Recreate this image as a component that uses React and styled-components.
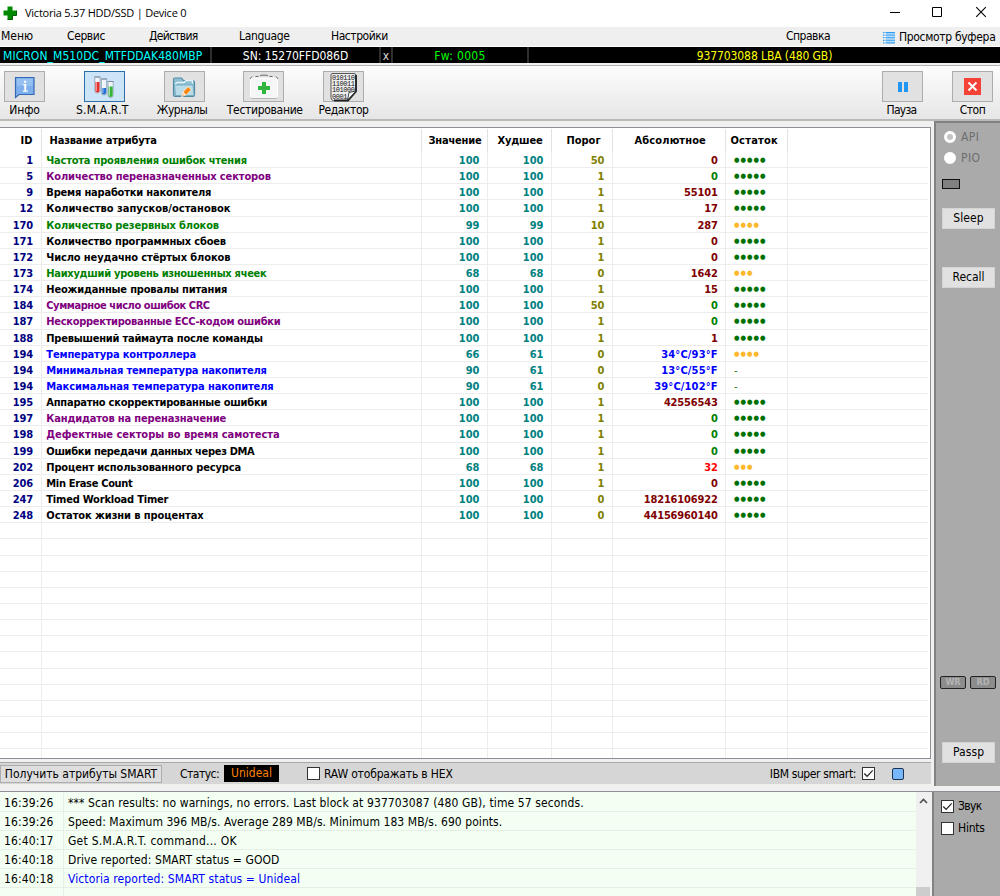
import React, { useState } from 'react'
import styled, { createGlobalStyle } from 'styled-components'

const GlobalStyle = createGlobalStyle`
    * {
        box-sizing: border-box;
    }
    body {
        margin: 0;
        overflow: hidden;
        background: #f0f0f0;
    }
    button {
        font: inherit;
        color: inherit;
        padding: 0;
        margin: 0;
    }
`

const attributes = [
    { id: 1, name: 'Частота проявления ошибок чтения', tone: 'green', value: 100, worst: 100, limit: 50, raw: '0', health: 5, ls: -0.21 },
    { id: 5, name: 'Количество переназначенных секторов', tone: 'purple', value: 100, worst: 100, limit: 1, raw: '0', rawTone: 'green', health: 5, ls: -0.12 },
    { id: 9, name: 'Время наработки накопителя', value: 100, worst: 100, limit: 1, raw: '55101', health: 5, ls: -0.19 },
    { id: 12, name: 'Количество запусков/остановок', value: 100, worst: 100, limit: 1, raw: '17', health: 5, ls: 0 },
    { id: 170, name: 'Количество резервных блоков', tone: 'green', value: 99, worst: 99, limit: 10, raw: '287', health: 4, ls: -0.15 },
    { id: 171, name: 'Количество программных сбоев', value: 100, worst: 100, limit: 1, raw: '0', health: 5, ls: -0.18 },
    { id: 172, name: 'Число неудачно стёртых блоков', value: 100, worst: 100, limit: 1, raw: '0', health: 5, ls: -0.12 },
    { id: 173, name: 'Наихудший уровень изношенных ячеек', tone: 'green', value: 68, worst: 68, limit: 0, raw: '1642', health: 3, ls: -0.28 },
    { id: 174, name: 'Неожиданные провалы питания', value: 100, worst: 100, limit: 1, raw: '15', health: 5, ls: -0.18 },
    { id: 184, name: 'Суммарное число ошибок CRC', tone: 'purple', value: 100, worst: 100, limit: 50, raw: '0', rawTone: 'green', health: 5, ls: -0.44 },
    { id: 187, name: 'Нескорректированные ECC-кодом ошибки', tone: 'purple', value: 100, worst: 100, limit: 1, raw: '0', rawTone: 'green', health: 5, ls: -0.29 },
    { id: 188, name: 'Превышений таймаута после команды', value: 100, worst: 100, limit: 1, raw: '1', health: 5, ls: -0.23 },
    { id: 194, name: 'Температура контроллера', tone: 'blue', value: 66, worst: 61, limit: 0, raw: '34°C/93°F', rawTone: 'blue', health: 4, ls: -0.15 },
    { id: 194, name: 'Минимальная температура накопителя', tone: 'blue', value: 90, worst: 61, limit: 0, raw: '13°C/55°F', rawTone: 'blue', health: 0, ls: -0.17 },
    { id: 194, name: 'Максимальная температура накопителя', tone: 'blue', value: 90, worst: 61, limit: 0, raw: '39°C/102°F', rawTone: 'blue', health: 0, ls: -0.13 },
    { id: 195, name: 'Аппаратно скорректированные ошибки', value: 100, worst: 100, limit: 1, raw: '42556543', health: 5, ls: -0.23 },
    { id: 197, name: 'Кандидатов на переназначение', tone: 'purple', value: 100, worst: 100, limit: 1, raw: '0', rawTone: 'green', health: 5, ls: -0.17 },
    { id: 198, name: 'Дефектные секторы во время самотеста', tone: 'purple', value: 100, worst: 100, limit: 1, raw: '0', rawTone: 'green', health: 5, ls: -0.03 },
    { id: 199, name: 'Ошибки передачи данных через DMA', value: 100, worst: 100, limit: 1, raw: '0', rawTone: 'green', health: 5, ls: -0.32 },
    { id: 202, name: 'Процент использованного ресурса', value: 68, worst: 68, limit: 1, raw: '32', rawTone: 'red', health: 3, ls: -0.15 },
    { id: 206, name: 'Min Erase Count', value: 100, worst: 100, limit: 1, raw: '0', health: 5, ls: -0.32 },
    { id: 247, name: 'Timed Workload Timer', value: 100, worst: 100, limit: 0, raw: '18216106922', health: 5, ls: -0.2 },
    { id: 248, name: 'Остаток жизни в процентах', value: 100, worst: 100, limit: 0, raw: '44156960140', health: 5, ls: -0.08 },
]

const emptyRows = Array.from({ length: 15 }, (_, i) => i)

const tones = {
    black: '#000000',
    green: '#008000',
    purple: '#800080',
    blue: '#0000ff',
    red: '#ff0000',
    maroon: '#800000',
}

const logLines = [
    { time: '16:39:26', text: '*** Scan results: no warnings, no errors. Last block at 937703087 (480 GB), time 57 seconds.', ls: 0.11 },
    { time: '16:39:26', text: 'Speed: Maximum 396 MB/s. Average 289 MB/s. Minimum 183 MB/s. 690 points.', ls: 0.06 },
    { time: '16:40:17', text: 'Get S.M.A.R.T. command... OK', ls: 0.24 },
    { time: '16:40:18', text: 'Drive reported: SMART status = GOOD', ls: 0.08 },
    { time: '16:40:18', text: 'Victoria reported: SMART status = Unideal', color: '#0000ff', ls: 0.1 },
]

/* ---------- icons ---------- */

const InfoIcon = () => (
    <svg width="22" height="24" viewBox="0 0 22 24">
        <path d="M1.5 2.5h18.5v17H5l-3.5 3z" fill="#7fb0ee" stroke="#3568b5" strokeWidth="1.2" />
        <path d="M2.8 3.8h16v7h-16z" fill="#96bff2" />
        <path d="M9.2 9h3v6.500h1.600v1.200H8.800v-1.200h1.500v-5.300h-1.100zM10 5.800h2.200v2H10z" fill="#fff" />
    </svg>
)

const Tube = ({ x, y, level, color }) => (
    <g>
        <path d={`M${x} ${y}v13.5a2.600 2.600 0 0 0 5.200 0v-13.500z`} fill="#edf3f8" stroke="#8b9fb3" strokeWidth=".8" />
        <path d={`M${x + 0.5} ${y + level}v${13.5 - level}a2.100 2.100 0 0 0 4.200 0v-${13.5 - level}z`} fill={color} />
        <path d={`M${x + 1.5} ${y + 1}v13`} stroke="#fff" strokeWidth="1" opacity=".6" />
        <path d={`M${x - 0.4} ${y}h6`} stroke="#7f8fa1" strokeWidth="1" />
    </g>
)

const TubesIcon = () => (
    <svg width="22" height="24" viewBox="0 0 22 24">
        <Tube x={1.8} y={2} level={5} color="#e5322d" />
        <Tube x={8.4} y={4} level={9} color="#2472d8" />
        <Tube x={15} y={6.5} level={5} color="#35b63b" />
    </svg>
)

const JournalIcon = () => (
    <svg width="26" height="24" viewBox="0 0 26 24">
        <path d="M2.5 20V4.500q0-1.500 1.500-1.500h6.500l2 2.500h9q2 0 2 2V20q0 1.500-1.500 1.500H4Q2.500 21.500 2.500 20z" fill="#8fbfd3" stroke="#538ba5" strokeWidth="1.2" />
        <path d="M4 9.500l2-2h7l2-2h6.500v3" fill="none" stroke="#e4f3f8" strokeWidth="1.300" />
        <path d="M3.500 10h18.500l1 10.500H4.500z" fill="#b9dce8" stroke="#6ba4bb" strokeWidth=".8" />
        <path d="M10.200 22.300l1.300-5.300 5.500-5.800 3.500 3.300-5.600 5.800z" fill="#fff4e8" />
        <path d="M12.300 17l4.700-5 2.900 2.700-4.800 5.100z" fill="#fb8614" />
        <path d="M10.500 21.500l1.200-3.500 2.600 2.400z" fill="#f3c79a" />
    </svg>
)

const TestIcon = () => (
    <svg width="30" height="26" viewBox="0 0 30 26">
        <path d="M1.500 6V23q0 1.500 1.500 1.500h24q1.500 0 1.500-1.500V6q0-2-2-2h-23q-2 0-2 2z" fill="#f6f6f6" stroke="#fff" strokeWidth="1" />
        <path d="M1 5l2-2.500M6.500 2.500h3M11 2l1-.8h6l1 .8M20.500 2.500h3M27 2.500L29 5" fill="none" stroke="#6d6d6d" strokeWidth="1" />
        <path d="M1.500 23.500q.5 1 1.500 1h24q1 0 1.500-1" fill="none" stroke="#b5b5b5" strokeWidth="1" />
        <path d="M13 8h4v4h4v4h-4v4h-4v-4H9v-4h4z" fill="#2fb53f" />
    </svg>
)

const EditorIcon = () => (
    <svg width="30" height="30" viewBox="0 0 30 30">
        <path d="M3 1.500h22q2 0 2 2v16l-8.500 9H4.500q-2.500 0-2.500-3V3.500q0-2 1-2z" fill="#ececec" stroke="#555" strokeWidth="1" />
        <path d="M27 3v16.500L19 28.500H5" fill="none" stroke="#222" strokeWidth="1.800" />
        <g fontFamily="'Liberation Mono'" fontSize="7" fill="#161616">
            <text x="3" y="7.800" textLength="23">010110</text>
            <text x="3" y="14" textLength="23">110011</text>
            <text x="3" y="20.400" textLength="23">101000</text>
            <text x="3" y="26.600" textLength="15.500">0001</text>
        </g>
        <path d="M18.500 28l1.500-7.500 7-1.500z" fill="#fafafa" stroke="#333" strokeWidth=".9" />
    </svg>
)

const PauseIcon = () => (
    <svg width="10" height="10" viewBox="0 0 10 10">
        <path d="M0 0h4v10H0zM6 0h4v10H6z" fill="#2196f3" />
    </svg>
)

const StopIcon = () => (
    <svg width="17" height="17" viewBox="0 0 17 17">
        <path d="M0 0h17v17H0z" fill="#f44336" />
        <path d="M4.500 4.500l8 8M12.500 4.500l-8 8" stroke="#fff" strokeWidth="2" />
    </svg>
)

const BufferIcon = () => (
    <svg width="12" height="12" viewBox="0 0 12 12">
        {[0.5, 3.1, 5.7, 8.3, 10.9].map(y => (
            <path key={y} d={`M0 ${y}h1.500M2.500 ${y}h9.500`} stroke="#2b9cf2" strokeWidth="1.300" />
        ))}
        <path d="M3 1.200h9v9H3z" fill="#7fc4fa" opacity=".45" />
    </svg>
)

const PlusLogo = () => (
    <svg width="14" height="14" viewBox="0 0 14 14">
        <path d="M4.500.5h5v4h4v5h-4v4h-5v-4h-4v-5h4z" fill="#008a00" />
        <path d="M4.500 13.500h5v-4h4v-5" fill="none" stroke="#015a01" strokeWidth="1" />
    </svg>
)

const WindowIcons = () => (
    <svg width="94" height="12" viewBox="0 0 94 12" fill="none" stroke="#000">
        <path d="M0 6.500h10M42.500 1.500h9v9h-9z" />
        <path d="M86.200 1.200l9.600 9.600M95.800 1.200l-9.600 9.600" strokeWidth="1.100" />
    </svg>
)

const toolbarItems = [
    { label: 'Инфо', icon: <InfoIcon />, ls: -0.1, shift: 0 },
    { label: 'S.M.A.R.T', icon: <TubesIcon />, ls: 0.22, shift: -2 },
    { label: 'Журналы', icon: <JournalIcon />, ls: -0.5, shift: -2 },
    { label: 'Тестирование', icon: <TestIcon />, ls: -0.31, shift: 1 },
    { label: 'Редактор', icon: <EditorIcon />, ls: -0.45, shift: 0 },
]

/* ---------- page ---------- */

function App() {
    const [active, setActive] = useState('S.M.A.R.T')
    const [hex, setHex] = useState(false)
    const [superSmart, setSuperSmart] = useState(true)
    const [sound, setSound] = useState(true)
    const [hints, setHints] = useState(false)

    return (
        <Window>
            <GlobalStyle />

            {/* Title bar */}
            <TitleBar>
                <PlusLogo />
                <Title>Victoria 5.37 HDD/SSD | Device 0</Title>
                <WindowIcons />
            </TitleBar>

            {/* Menu */}
            <MenuBar>
                <MenuItem $ls={0}>Меню</MenuItem>
                <MenuItem $ls={-0.4}>Сервис</MenuItem>
                <MenuItem $ls={-0.7}>Действия</MenuItem>
                <MenuItem $ls={-0.33}>Language</MenuItem>
                <MenuItem $ls={-0.45}>Настройки</MenuItem>
                <MenuItem $ls={-0.5}>Справка</MenuItem>
                <MenuItem $ls={-0.32} $drop><BufferIcon />Просмотр буфера</MenuItem>
            </MenuBar>

            {/* Drive passport line */}
            <DriveBar>
                <DriveCell $color="#00ffff" $ls={0.07}>MICRON_M510DC_MTFDDAK480MBP</DriveCell>
                <DriveCell $center $color="#ffffff" $ls={-0.04}>SN: 15270FFD086D</DriveCell>
                <DriveCell $center $color="#dcdcdc">x</DriveCell>
                <DriveCell $center $color="#00ff00" $ls={0.3}>Fw: 0005</DriveCell>
                <DriveCell $center $color="#ffff00" $ls={-0.1}>937703088 LBA (480 GB)</DriveCell>
            </DriveBar>

            {/* Toolbar */}
            <Toolbar>
                {toolbarItems.map(item => (
                    <Tool key={item.label}>
                        <ToolButton $active={active === item.label} onClick={() => setActive(item.label)}>
                            {item.icon}
                        </ToolButton>
                        <ToolLabel $ls={item.ls} $shift={item.shift}>{item.label}</ToolLabel>
                    </Tool>
                ))}
                <ToolSpacer />
                <Tool>
                    <ToolButton><PauseIcon /></ToolButton>
                    <ToolLabel $ls={-0.7} $shift={-1}>Пауза</ToolLabel>
                </Tool>
                <Tool>
                    <ToolButton><StopIcon /></ToolButton>
                    <ToolLabel $ls={-0.5} $shift={0}>Стоп</ToolLabel>
                </Tool>
            </Toolbar>

            <Main>
                <TablePane>
                    <Table>
                        <HeadRow>
                            <Head $align="right">ID</Head>
                            <Head $align="left" $ls={-0.15}>Название атрибута</Head>
                            <Head $shift={2} $ls={-0.2}>Значение</Head>
                            <Head $shift={2} $ls={-0.15}>Худшее</Head>
                            <Head $shift={4}>Порог</Head>
                            <Head $shift={3} $ls={0.12}>Абсолютное</Head>
                            <Head $shift={-4} $ls={0.25}>Остаток</Head>
                            <Head />
                        </HeadRow>
                        {attributes.map((a, i) => (
                            <Row key={i}>
                                <IdCell>{a.id}</IdCell>
                                <NameCell $color={tones[a.tone || 'black']} $ls={a.ls}>{a.name}</NameCell>
                                <NumCell $color="#008080">{a.value}</NumCell>
                                <NumCell $color="#008080">{a.worst}</NumCell>
                                <NumCell $color="#808000">{a.limit}</NumCell>
                                <NumCell $color={tones[a.rawTone || 'maroon']} $ls={a.raw.includes('°') ? 0.15 : -0.16}>{a.raw}</NumCell>
                                {a.health > 0
                                    ? <Dots $low={a.health < 5}>{'●'.repeat(a.health)}</Dots>
                                    : <NoHealth>-</NoHealth>}
                                <Cell />
                            </Row>
                        ))}
                        {emptyRows.map(i => (
                            <Row key={i}>
                                <Cell /><Cell /><Cell /><Cell /><Cell /><Cell /><Cell /><Cell />
                            </Row>
                        ))}
                    </Table>

                    {/* Status line */}
                    <StatusBar>
                        <GetSmartButton>Получить атрибуты SMART</GetSmartButton>
                        <StatusLabel>Статус:</StatusLabel>
                        <StatusValue>Unideal</StatusValue>
                        <HexOption onClick={() => setHex(!hex)}>
                            <Check on={hex} />
                            RAW отображать в HEX
                        </HexOption>
                        <SuperSmart onClick={() => setSuperSmart(!superSmart)}>
                            IBM super smart:
                            <Check on={superSmart} />
                        </SuperSmart>
                        <BlueLamp />
                    </StatusBar>
                </TablePane>

                <SidePane>
                    <RadioLabel><Radio $on />API</RadioLabel>
                    <RadioLabel><Radio />PIO</RadioLabel>
                    <GreyLamp />
                    <SideButton $top={19} $ls={0.1}>Sleep</SideButton>
                    <SideButton $top={38}>Recall</SideButton>
                    <SideSpacer />
                    <Leds>
                        <Led>WR</Led>
                        <Led>RD</Led>
                    </Leds>
                    <SideButton $top={53} $ls={0.1}>Passp</SideButton>
                </SidePane>
            </Main>

            <Bottom>
                <Log>
                    {logLines.map((line, i) => (
                        <LogRow key={i}>
                            <LogTime>{line.time}</LogTime>
                            <LogText $color={line.color} $ls={line.ls}>{line.text}</LogText>
                        </LogRow>
                    ))}
                    <LogRow><LogTime /><LogText /></LogRow>
                </Log>
                <Scrollbar>
                    <svg width="9" height="6" viewBox="0 0 9 6">
                        <path d="M1 5l3.500-3.500L8 5" fill="none" stroke="#505050" strokeWidth="1.700" />
                    </svg>
                    <ScrollThumb />
                </Scrollbar>
                <Options>
                    <Option $ls={-0.7} onClick={() => setSound(!sound)}><Check on={sound} />Звук</Option>
                    <Option $ls={-0.25} onClick={() => setHints(!hints)}><Check on={hints} />Hints</Option>
                </Options>
            </Bottom>
        </Window>
    )
}

function Check({ on }) {
    return (
        <CheckBox>
            {on && (
                <svg width="11" height="11" viewBox="0 0 11 11">
                    <path d="M1.300 5.500l2.800 2.900 5.600-6" fill="none" stroke="#222" strokeWidth="1.200" />
                </svg>
            )}
        </CheckBox>
    )
}

const Window = styled.div`
    display: flex;
    flex-direction: column;
    width: 1000px;
    height: 896px;
    overflow: hidden;
    background: #f0f0f0;
    color: #000;
    font: 12px/14px "DejaVu Sans Condensed", "DejaVu Sans", Tahoma, sans-serif;
    white-space: nowrap;
    cursor: default;
`

const TitleBar = styled.div`
    display: flex;
    align-items: center;
    flex: none;
    height: 27px;
    padding: 0 14px 2px 3px;
    background: #fff;
    > svg:last-child {
        margin: 0 2px 1px auto;
        overflow: visible;
    }
`

const Title = styled.span`
    margin: 1px 0 0 8px;
    font: 11px/14px "Open Sans", sans-serif;
    letter-spacing: -0.24px;
`

const MenuBar = styled.div`
    display: grid;
    grid-template-columns: 66px 82px 90px 92px 455px 97px 1fr;
    align-items: center;
    flex: none;
    height: 19px;
    padding: 0 0 2px 1px;
    background: #efefef;
`

const MenuItem = styled.span`
    display: flex;
    align-items: center;
    gap: 4px;
    margin-top: ${p => (p.$drop ? 2 : 0)}px;
    letter-spacing: ${p => p.$ls}px;
    svg {
        flex: none;
        margin-top: 2px;
    }
`

const DriveBar = styled.div`
    display: grid;
    grid-template-columns: 212px 169px 12px 136px 1fr;
    flex: none;
    height: 17px;
    border-top: 1px solid #fff;
    background: #000;
`

const DriveCell = styled.span`
    height: 16px;
    padding: ${p => (p.$center ? '0' : '0 0 0 3px')};
    border-right: 2px solid #2e2e2e;
    color: ${p => p.$color};
    text-align: ${p => (p.$center ? 'center' : 'left')};
    letter-spacing: ${p => p.$ls || 0}px;
    line-height: 18px;
    &:last-child {
        border-right: none;
    }
`

const Toolbar = styled.div`
    display: flex;
    flex: none;
    height: 56px;
    margin-top: 2px;
    padding: 5px 7px 0 4px;
    border-top: 1px solid #b4b4b4;
    border-bottom: 2px solid #b9b9b9;
    background: linear-gradient(#fdfdfd, #e6e6e6);
`

const Tool = styled.div`
    display: flex;
    flex-direction: column;
    align-items: center;
    width: 41px;
    margin-right: 38.75px;
    &:nth-last-child(2) {
        margin-right: 29px;
    }
    &:last-child {
        margin-right: 0;
    }
`

const ToolLabel = styled.span`
    margin-left: ${p => p.$shift * 2}px;
    letter-spacing: ${p => p.$ls}px;
    line-height: 17px;
`

const ToolSpacer = styled.div`
    flex: 1;
`

const ToolButton = styled.button`
    display: flex;
    align-items: center;
    justify-content: center;
    flex: none;
    width: 41px;
    height: 31px;
    border: 1px solid ${p => (p.$active ? '#2d6ea8' : '#adadad')};
    background: ${p => (p.$active ? '#cce4f7' : '#e1e1e1')};
    svg {
        flex: none;
    }
`

const Main = styled.div`
    display: flex;
    flex: none;
    height: 665px;
`

const TablePane = styled.div`
    display: flex;
    flex-direction: column;
    width: 931px;
    border-top: 2px solid #f0f0f0;
`

const Table = styled.div`
    flex: none;
    height: 632px;
    margin-top: 4px;
    padding: 1px 2px 0 0;
    overflow: hidden;
    border: 1px solid #8c9096;
    border-width: 1px 1px 1px 0;
    background: #fff;
    font-size: 11px;
    font-weight: 700;
`

const columns = '41.5px 380px 66px 64px 61px 113.5px 61.5px 1fr'

const HeadRow = styled.div`
    display: grid;
    grid-template-columns: ${columns};
    height: 23px;
`

const Head = styled.div`
    padding: ${p => (p.$align === 'right' ? '0 8px 0 0' : p.$align === 'left' ? '0 0 0 8px' : '0')};
    text-indent: ${p => (p.$shift || 0)}px;
    border-right: 1px solid #e2e2e2;
    text-align: ${p => p.$align || 'center'};
    letter-spacing: ${p => p.$ls || 0}px;
    line-height: 23px;
    &:last-child {
        border-right: none;
    }
`

const Row = styled.div`
    display: grid;
    grid-template-columns: ${columns};
    height: 16.15px;
    border-bottom: 1px solid #ededed;
`

const Cell = styled.div`
    border-right: 1px solid #ededed;
    line-height: 17px;
    &:last-child {
        border-right: none;
    }
`

const IdCell = styled(Cell)`
    padding-right: 7.5px;
    color: #000080;
    text-align: right;
    letter-spacing: -0.1px;
`

const NameCell = styled(Cell)`
    padding-left: 4.8px;
    color: ${p => p.$color};
    letter-spacing: ${p => p.$ls}px;
`

const NumCell = styled(Cell)`
    padding-right: 7.3px;
    color: ${p => p.$color};
    text-align: right;
    letter-spacing: ${p => p.$ls || -0.1}px;
`

const Dots = styled(Cell)`
    padding-left: 8px;
    color: ${p => (p.$low ? '#fdb92e' : '#007000')};
    font-size: 7px;
    letter-spacing: 1px;
`

const NoHealth = styled(Cell)`
    padding-left: 8px;
    color: #008000;
    font-weight: 400;
`

const StatusBar = styled.div`
    display: flex;
    align-items: center;
    height: 22px;
    margin-top: 3px;
    border-top: 1px solid #a8a8a8;
    background: #d6d6d6;
`

const GetSmartButton = styled.button`
    width: 162px;
    height: 18px;
    border: 1px solid #adadad;
    background: #dedede;
    line-height: 16px;
`

const StatusLabel = styled.span`
    width: 44px;
    margin-left: 18px;
    letter-spacing: -0.5px;
`

const StatusValue = styled.span`
    width: 55px;
    height: 17px;
    background: #000;
    color: #ff8000;
    text-align: center;
    line-height: 17px;
`

const OptionBase = styled.label`
    display: flex;
    align-items: center;
    gap: 4px;
`

const HexOption = styled(OptionBase)`
    margin-left: 28px;
    letter-spacing: -0.17px;
`

const SuperSmart = styled(OptionBase)`
    margin-left: auto;
    letter-spacing: -0.38px;
    gap: 6px;
`

const CheckBox = styled.span`
    flex: none;
    width: 13px;
    height: 13px;
    border: 1px solid #333;
    background: #fff;
    svg {
        display: block;
    }
`

const BlueLamp = styled.span`
    width: 12px;
    height: 12px;
    margin: 0 27px 0 17px;
    border: 1px solid #1c3450;
    border-radius: 2px;
    background: #77b7fb;
`

const SidePane = styled.div`
    display: flex;
    flex-direction: column;
    width: 66px;
    margin-left: 3px;
    padding: 3px 0 23px 6px;
    border: 2px solid #828282;
    border-width: 2px 0 0 2px;
    background: #aaa;
`

const RadioLabel = styled.label`
    display: flex;
    align-items: center;
    gap: 5px;
    height: 21px;
    margin-left: 2px;
    color: #6d6d6d;
    letter-spacing: 0.4px;
`

const Radio = styled.span`
    width: 12px;
    height: 12px;
    border: 3px solid #fff;
    border-radius: 50%;
    background: ${p => (p.$on ? '#c4c4c4' : '#fff')};
`

const GreyLamp = styled.span`
    width: 18px;
    height: 10px;
    margin-top: 11px;
    border: 1px solid #111;
    background: #808080;
`

const SideButton = styled.button`
    flex: none;
    width: 53px;
    height: 21px;
    margin-top: ${p => p.$top}px;
    border: 1px solid #d4d4d4;
    background: #e1e1e1;
    letter-spacing: ${p => p.$ls || 0}px;
    line-height: 19px;
`

const SideSpacer = styled.div`
    flex: 1;
`

const Leds = styled.div`
    display: flex;
    gap: 4px;
    margin-left: -2px;
`

const Led = styled.span`
    width: 26px;
    height: 13px;
    border: 1px solid #222;
    border-radius: 2px;
    background: #8c8c8c;
    color: #b4b4b4;
    font-size: 9px;
    font-weight: 700;
    text-align: center;
    line-height: 11px;
`

const Bottom = styled.div`
    display: flex;
    flex: 1;
    min-height: 0;
    margin-top: 5px;
    border-top: 1px solid #8c9096;
`

const Log = styled.div`
    width: 917px;
    padding: 1px 1px 0 0;
    overflow: hidden;
    background: #f2fff2;
`

const LogRow = styled.div`
    display: grid;
    grid-template-columns: 64px 1fr;
    grid-template-rows: 18px;
    height: 19px;
    border-bottom: 1px solid #e6eee6;
    line-height: 20px;
`

const LogTime = styled.span`
    padding-left: 4px;
    border-right: 1px solid #e6eee6;
    letter-spacing: 0.12px;
`

const LogText = styled.span`
    padding-left: 4px;
    color: ${p => p.$color || '#000'};
    letter-spacing: ${p => p.$ls || 0}px;
`

const Scrollbar = styled.div`
    display: flex;
    flex-direction: column;
    align-items: center;
    justify-content: space-between;
    width: 14px;
    padding-top: 6px;
    background: #f0f0f0;
`

const ScrollThumb = styled.div`
    width: 14px;
    height: 9px;
    background: #cdcdcd;
`

const Options = styled.div`
    display: flex;
    flex-direction: column;
    gap: 8px;
    width: 68px;
    margin-left: 2px;
    padding: 7px 0 0 7px;
    border-left: 2px solid #828282;
    background: #aaa;
`

const Option = styled(OptionBase)`
    height: 14px;
    letter-spacing: ${p => p.$ls}px;
`

export default App
